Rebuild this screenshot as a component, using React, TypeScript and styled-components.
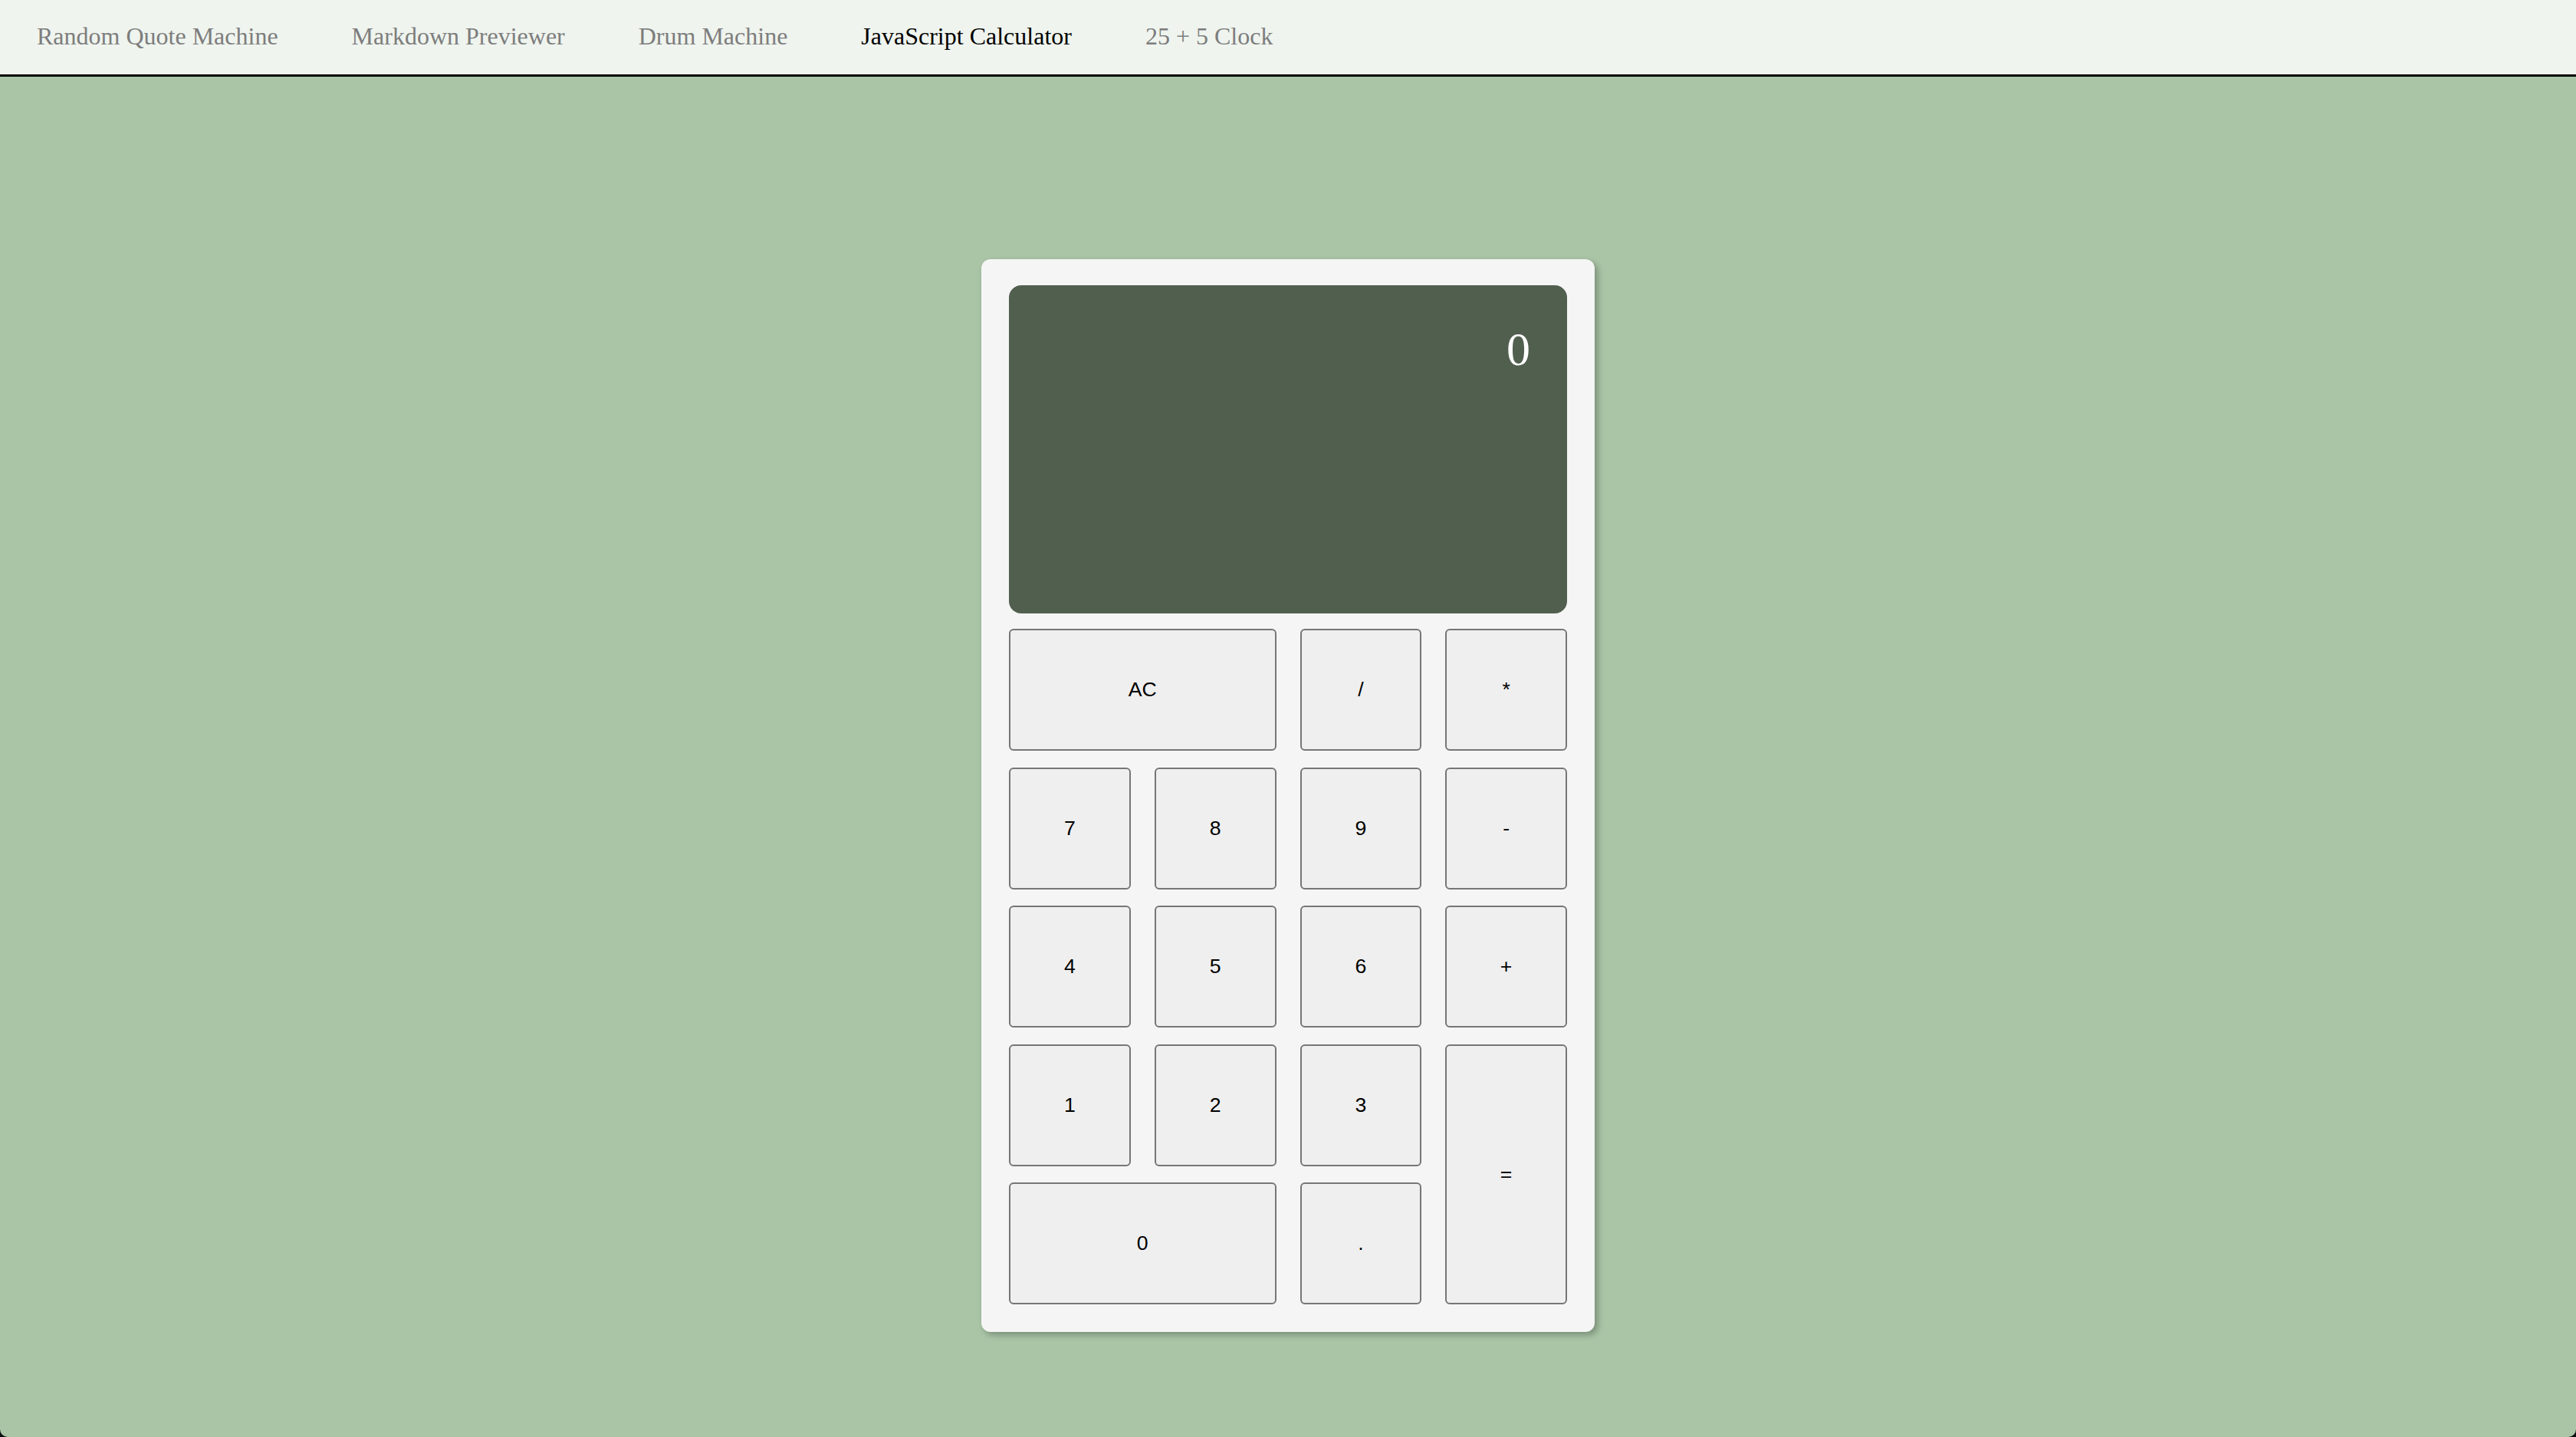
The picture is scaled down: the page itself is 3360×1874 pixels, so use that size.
import React from "react";
import styled, { createGlobalStyle } from "styled-components";

const GlobalStyle = createGlobalStyle`
  html, body {
    margin: 0;
    padding: 0;
    background: #0b0f14;
  }
  * { box-sizing: border-box; }
`;

const Page = styled.div`
  min-height: 100vh;
  background: #a9c5a6;
  border-bottom-left-radius: 10px;
  border-bottom-right-radius: 10px;
  overflow: hidden;
  display: flex;
  flex-direction: column;
`;

const NavBar = styled.nav`
  height: 100px;
  background: #eff4ee;
  border-bottom: 3px solid #000;
  display: flex;
  align-items: center;
  padding-bottom: 2px;
`;

const NavLink = styled.a<{ $active?: boolean }>`
  padding: 0 48px;
  font-family: "Liberation Serif", "Times New Roman", serif;
  font-size: 32px;
  color: ${(p) => (p.$active ? "#000" : "#7d7d7d")};
  text-decoration: none;
  cursor: pointer;
  white-space: nowrap;
`;

const Main = styled.main`
  flex: 1;
  display: flex;
  justify-content: center;
  align-items: flex-start;
  padding-top: 238px;
`;

const Card = styled.div`
  width: 800px;
  background: #f5f5f5;
  border-radius: 12px;
  padding: 34px 36px 36px;
  box-shadow: 4px 4px 8px rgba(0, 0, 0, 0.28);
  display: flex;
  flex-direction: column;
  gap: 20px;
`;

const Display = styled.div`
  height: 428px;
  background: #515f4f;
  border-radius: 16px;
  padding: 48px 48px;
  text-align: right;
  color: #fff;
  font-family: "Liberation Serif", "Times New Roman", serif;
  font-size: 62px;
  line-height: 1.15;
`;

const Keypad = styled.div`
  display: grid;
  grid-template-columns: repeat(4, 1fr);
  grid-auto-rows: 159px;
  column-gap: 31px;
  row-gap: 21.6px;
`;

const Key = styled.button<{ $col?: string; $row?: string }>`
  grid-column: ${(p) => p.$col ?? "auto"};
  grid-row: ${(p) => p.$row ?? "auto"};
  background: #efefef;
  border: 2px solid #767676;
  border-radius: 6px;
  font-family: "Liberation Sans", Arial, sans-serif;
  font-size: 26.67px;
  color: #000;
  padding: 0;
  cursor: pointer;
`;

const navItems = [
  "Random Quote Machine",
  "Markdown Previewer",
  "Drum Machine",
  "JavaScript Calculator",
  "25 + 5 Clock",
];

type KeyDef = { id: string; label: string; col?: string; row?: string };

const keys: KeyDef[] = [
  { id: "clear", label: "AC", col: "1 / span 2" },
  { id: "divide", label: "/" },
  { id: "multiply", label: "*" },
  { id: "seven", label: "7" },
  { id: "eight", label: "8" },
  { id: "nine", label: "9" },
  { id: "subtract", label: "-" },
  { id: "four", label: "4" },
  { id: "five", label: "5" },
  { id: "six", label: "6" },
  { id: "add", label: "+" },
  { id: "one", label: "1", col: "1", row: "4" },
  { id: "two", label: "2", col: "2", row: "4" },
  { id: "three", label: "3", col: "3", row: "4" },
  { id: "equals", label: "=", col: "4", row: "4 / span 2" },
  { id: "zero", label: "0", col: "1 / span 2", row: "5" },
  { id: "decimal", label: ".", col: "3", row: "5" },
];

export default function App() {
  return (
    <>
      <GlobalStyle />
      <Page>
        <NavBar>
          {navItems.map((item) => (
            <NavLink key={item} $active={item === "JavaScript Calculator"}>
              {item}
            </NavLink>
          ))}
        </NavBar>
        <Main>
          <Card>
            <Display id="display">0</Display>
            <Keypad>
              {keys.map((k) => (
                <Key key={k.id} id={k.id} $col={k.col} $row={k.row}>
                  {k.label}
                </Key>
              ))}
            </Keypad>
          </Card>
        </Main>
      </Page>
    </>
  );
}
